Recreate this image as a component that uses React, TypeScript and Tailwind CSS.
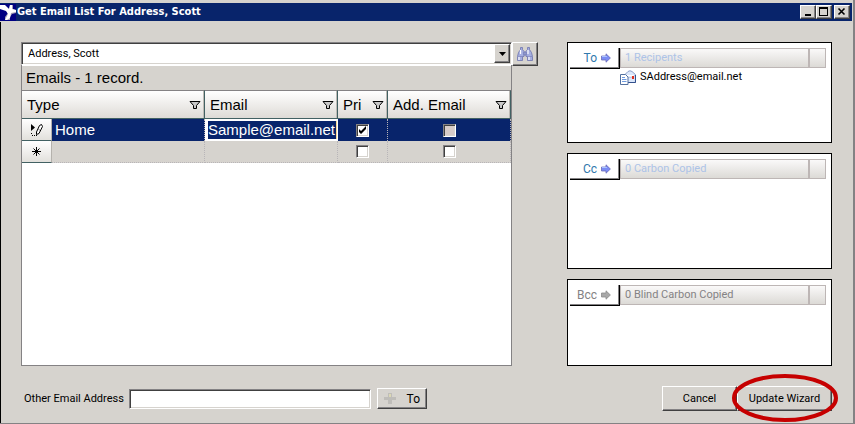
import { useState } from 'react'
import clsx from 'clsx'

interface EmailRow {
  id: string
  type: string
  email: string
  primary: boolean
  additional: boolean
}

interface RecipientPanelProps {
  label: string
  title: string
  recipients?: string[]
  disabled?: boolean
  className: string
}

const raised =
  'border border-t-white border-l-white border-r-[#404040] border-b-[#404040] bg-[#d6d3ce] shadow-[inset_-1px_-1px_0_#848284]'
const sunken =
  'border border-t-[#848284] border-l-[#848284] border-r-white border-b-white shadow-[inset_1px_1px_0_#404040,inset_-1px_-1px_0_#d6d3ce]'
const uiFont = "font-['Roboto','Liberation_Sans',sans-serif] text-[11px] leading-4"

const columns = ['Type', 'Email', 'Pri', 'Add. Email']

function BirdLogo() {
  return (
    <svg width="16" height="17" viewBox="0 0 16 17" className="shrink-0 bg-[#000082]" aria-hidden="true">
      <path d="M0 2h5l4 3 1-4h3v4l3 1v3l-4 1-2 3v3H5v-3l3-4-2-3-6-2z" fill="#a5a2b5" />
      <path d="M0 1h5l4 4 1-4h2v4l4 1v2l-5 1-1 5-3 2H5l3-6-2-3-6-2z" fill="#fff" />
    </svg>
  )
}

function FilterIcon() {
  return (
    <svg width="12" height="10" viewBox="0 0 12 10" className="shrink-0" aria-hidden="true">
      <path d="M1 1.500h10L7.500 5.500V8.500h-3V5.500z" fill="#c8c8c8" stroke="#000" strokeWidth="1" />
    </svg>
  )
}

function ArrowIcon({ disabled }: { disabled?: boolean }) {
  return (
    <svg width="10" height="10" viewBox="0 0 10 10" aria-hidden="true">
      <path
        d="M.5 3H5V.8L9.400 5 5 9.200V7H.5z"
        fill={disabled ? '#a8a8a8' : '#7b8df5'}
        stroke={disabled ? '#8c8c8c' : '#6a6ab8'}
        strokeWidth=".8"
      />
      {!disabled && <path d="M1 3.500h5" stroke="#a9c4ff" strokeWidth="1" />}
    </svg>
  )
}

function BinocularsIcon() {
  return (
    <svg width="16" height="14" viewBox="0 0 16 14" aria-hidden="true">
      <g fill="#a5aee0" stroke="#6d74ae" strokeWidth=".8">
        <path d="M3.500.5h2v2l1.500 2v5H5.500v4H.5v-4l1-4 2-3z" />
        <path d="M10.500.5h2v2l2 3 1 4v4h-5v-4H9v-5l1.500-2z" />
        <path d="M7 5h2v3H7z" />
      </g>
      <path d="M3.500 3v4M2 9v4M11 3v4M12 9v4" stroke="#fff" strokeWidth="1.200" />
      <path d="M1 9.500h4.500M10.500 9.500h4.500" stroke="#7d84bc" strokeWidth=".8" />
    </svg>
  )
}

function MailIcon() {
  return (
    <svg width="16" height="15" viewBox="0 0 16 15" className="shrink-0" aria-hidden="true">
      <path d="M5 4.500 8 1.500Q10 0 12 1.500L15.400 4.500v8H5z" fill="#dbe7fb" stroke="#8c9fc8" strokeWidth="1" />
      <path d="M5 5c3 3 7 3 10.400 0" fill="#fff" stroke="#9db2da" strokeWidth=".8" />
      <path d="M7 12.500h8.500V5" fill="none" stroke="#33508c" strokeWidth="1" />
      <path d="M12 6h2v3h-2z" fill="#e0301e" />
      <path d="M.5 4.500h5L8 7v7.500H.5z" fill="#fff" stroke="#54719f" strokeWidth="1" />
      <path d="M2 7.500h3M2 9.500h4.500M2 11.500h4.500" stroke="#6f9be0" strokeWidth="1" />
    </svg>
  )
}

function EditingIcon() {
  return (
    <svg width="14" height="14" viewBox="0 0 14 14" className="mx-auto" aria-hidden="true">
      <path d="M1 1v7l4-3.500z" fill="#000" />
      <path d="M9.500 2.500 11.500 1.500 12.500 3.500 9 10.500 6.500 11.500V9z" fill="#fff" stroke="#000" strokeWidth="1" />
      <path d="M9 6.500l1 1M2 12.500h1M4 12.500h1M6 12.500h1M1 10.500h1" stroke="#000" />
    </svg>
  )
}

function NewRowIcon() {
  return (
    <svg width="9" height="9" viewBox="0 0 9 9" className="mx-auto" aria-hidden="true">
      <path d="M4.500 0v9M0 4.500h9M1.500 1.500l6 6M7.500 1.500l-6 6" stroke="#000" strokeWidth="1" />
    </svg>
  )
}

function GridCheckbox({ label, checked, tinted }: { label: string; checked?: boolean; tinted?: boolean }) {
  return (
    <span className="relative mx-auto block size-[13px]">
      <input
        type="checkbox"
        aria-label={label}
        defaultChecked={checked}
        className={clsx('peer block size-[13px] appearance-none', sunken, tinted ? 'bg-[#d6cbc8]' : 'bg-white')}
      />
      <svg
        viewBox="0 0 13 13"
        className="pointer-events-none absolute inset-0 hidden size-[13px] peer-checked:block"
        aria-hidden="true"
      >
        <path d="M3 5v3l2 2 5-5V2L5 7z" fill="#000" />
      </svg>
    </span>
  )
}

function TitleBar() {
  const control = clsx('flex h-3.5 w-4 items-center justify-center', raised)

  return (
    <header className="mt-[3px] mr-px flex h-[18px] items-center bg-[#08246b] pr-0.5">
      <BirdLogo />
      <h1 className="ml-px flex-1 truncate font-['DejaVu_Sans_Condensed','DejaVu_Sans',sans-serif] text-[11px] font-bold text-white">
        Get Email List For Address, Scott
      </h1>
      <button type="button" aria-label="Minimize" className={control}>
        <svg width="12" height="10" viewBox="0 0 12 10">
          <path d="M3 7h6v2H3z" />
        </svg>
      </button>
      <button type="button" aria-label="Maximize" className={control}>
        <svg width="12" height="10" viewBox="0 0 12 10">
          <path d="M1 0h9v9H1zM2 2v6h7V2z" fillRule="evenodd" />
        </svg>
      </button>
      <button type="button" aria-label="Close" className={clsx(control, 'ml-0.5')}>
        <svg width="12" height="10" viewBox="0 0 12 10">
          <path d="M2.500 1.500l6 6M8.500 1.500l-6 6" stroke="#000" strokeWidth="1.600" />
        </svg>
      </button>
    </header>
  )
}

function EmailGrid({ rows }: { rows: EmailRow[] }) {
  const selector =
    'h-[22px] border-r border-b border-r-[#b5b2ad] border-b-[#426163] bg-linear-to-b from-white to-[#e2e0dc] p-0'
  const dotted = 'border-r border-dotted border-[#b8b5b8] p-0'

  return (
    <div className="flex-1 border border-t-0 border-[#848284] bg-white font-['Liberation_Sans',sans-serif] text-[15px] leading-5">
      <table className="w-full table-fixed border-separate border-spacing-0">
        <caption className="h-[25px] border-t border-white bg-[#d6d3ce] pt-0.5 pl-1 text-left">
          Emails - 1 record.
        </caption>
        <colgroup>
          <col className="w-[30px]" />
          <col className="w-[153px]" />
          <col className="w-[133px]" />
          <col className="w-[50px]" />
          <col />
        </colgroup>
        <thead>
          <tr>
            {columns.map((name, i) => (
              <th
                key={name}
                colSpan={i === 0 ? 2 : 1}
                className="h-[29px] border-t border-r border-b border-t-[#848284] border-r-[#426163] border-b-[#426163] bg-linear-to-b from-white to-[#dedbd6] px-0 font-normal shadow-[inset_-1px_0_0_#bdbab5]"
              >
                <div className="flex items-center justify-between pr-[3px] pl-[5px]">
                  {name}
                  <FilterIcon />
                </div>
              </th>
            ))}
          </tr>
        </thead>
        <tbody>
          {rows.map(row => (
            <tr key={row.id} className="bg-[#08246b] text-white">
              <td className={selector}>
                <EditingIcon />
              </td>
              <td className="border-r border-dotted border-[#b8b5b8] py-0 pr-0 pl-[3px]">{row.type}</td>
              <td className="bg-white py-0 pr-px pl-[3px]">
                <input
                  aria-label="Email"
                  defaultValue={row.email}
                  className="block h-[18px] w-full border-r border-[#f7db94] bg-[#08246b] text-white outline-none"
                />
              </td>
              <td className={dotted}>
                <GridCheckbox label="Pri" checked={row.primary} />
              </td>
              <td className={dotted}>
                <GridCheckbox label="Add. Email" checked={row.additional} tinted />
              </td>
            </tr>
          ))}
          <tr className="bg-[#d6d3ce]">
            <td className={selector}>
              <NewRowIcon />
            </td>
            <td className={clsx(dotted, 'border-b')} />
            <td className={clsx(dotted, 'border-b')} />
            <td className={clsx(dotted, 'border-b')}>
              <GridCheckbox label="New row Pri" />
            </td>
            <td className={clsx(dotted, 'border-b')}>
              <GridCheckbox label="New row Add. Email" />
            </td>
          </tr>
        </tbody>
      </table>
    </div>
  )
}

function RecipientPanel({ label, title, recipients = [], disabled, className }: RecipientPanelProps) {
  return (
    <section className={clsx('border border-black bg-white pt-[5px] pr-[5px] pl-0.5', className)}>
      <div className="flex">
        <button
          type="button"
          disabled={disabled}
          className={clsx(
            'flex h-[21px] w-[50px] items-center justify-end gap-1 border-r border-b border-black pr-2 text-xs shadow-[inset_-1px_-1px_0_#848284]',
            disabled ? 'text-[#848284]' : 'text-[#3179ad]'
          )}
        >
          {label}
          <ArrowIcon disabled={disabled} />
        </button>
        <div
          className={clsx(
            'flex h-5 flex-1 border border-[#bdb6b5] bg-linear-to-b from-[#faf9f9] to-[#dcdad6]',
            disabled ? 'text-[#848284]' : 'text-[#adc3e7]'
          )}
        >
          <h2 className="flex-1 pt-px pl-1">{title}</h2>
          <span className="w-[17px] border-l-2 border-[#bdb6b5]" />
        </div>
      </div>
      <ul className="pl-[50px]">
        {recipients.map(address => (
          <li key={address} className="flex items-center gap-1">
            <MailIcon />
            {address}
          </li>
        ))}
      </ul>
    </section>
  )
}

export default function App() {
  const [contact, setContact] = useState('Address, Scott')
  const [rows] = useState<EmailRow[]>([
    { id: 'home', type: 'Home', email: 'Sample@email.net', primary: true, additional: false }
  ])

  return (
    <div className={clsx('flex min-h-screen flex-col border-r-2 border-b border-[#848284] bg-[#d6d3ce] text-black', uiFont)}>
      <TitleBar />
      <main className="mt-px flex flex-1 flex-col border-l border-black pt-5 pr-[21px] pl-5">
        <div className="flex">
          <div className="flex min-w-0 flex-1 flex-col">
            <div className="relative">
              <select
                aria-label="Contact"
                value={contact}
                onChange={e => setContact(e.target.value)}
                className={clsx('block h-[23px] w-full appearance-none bg-white pl-1.5', sunken)}
              >
                <option>Address, Scott</option>
              </select>
              <span
                className={clsx(
                  'pointer-events-none absolute top-0.5 right-0.5 bottom-0.5 flex w-4 items-center justify-center',
                  raised
                )}
              >
                <svg width="7" height="4" viewBox="0 0 7 4" aria-hidden="true">
                  <path d="M0 0h7L3.500 4z" />
                </svg>
              </span>
            </div>
            <EmailGrid rows={rows} />
          </div>
          <button
            type="button"
            aria-label="Find"
            className={clsx('mr-[29px] flex h-6 w-[26px] items-center justify-center', raised)}
          >
            <BinocularsIcon />
          </button>
          <div className="flex w-[265px] flex-col gap-2.5">
            <RecipientPanel
              label="To"
              title="1 Recipents"
              recipients={['SAddress@email.net']}
              className="min-h-[101px]"
            />
            <RecipientPanel label="Cc" title="0 Carbon Copied" className="min-h-[116px]" />
            <RecipientPanel label="Bcc" title="0 Blind Carbon Copied" disabled className="min-h-[87px]" />
          </div>
        </div>
        <footer className="mt-5 flex items-center">
          <label htmlFor="other-email" className="w-[108px] pl-[3px] whitespace-nowrap">
            Other Email Address
          </label>
          <input id="other-email" type="email" className={clsx('h-5 w-[242px] bg-white px-1', sunken)} />
          <button
            type="button"
            className={clsx('ml-1.5 flex h-[21px] w-[50px] items-center justify-between pr-1.5 pl-1.5 text-xs', raised)}
          >
            <svg width="12" height="11" viewBox="0 0 12 11" aria-hidden="true">
              <path d="M4 0h4v4h4v3H8v4H4V7H0V4h4z" fill="#bfbdb9" />
              <path d="M5 1h2v3H5z" fill="#dcd8b4" />
            </svg>
            To
          </button>
          <button type="button" className={clsx('ml-auto h-[25px] w-[75px]', raised)}>
            Cancel
          </button>
          <div className="relative">
            <button type="button" className={clsx('block h-[25px] w-[95px]', raised)}>
              Update Wizard
            </button>
            <svg
              viewBox="0 0 108 50"
              className="pointer-events-none absolute -top-[13px] -left-1.5 h-[50px] w-[108px]"
              aria-hidden="true"
            >
              <ellipse cx="54" cy="25" rx="51" ry="22" fill="none" stroke="#c60000" strokeWidth="4" />
            </svg>
          </div>
        </footer>
      </main>
    </div>
  )
}
